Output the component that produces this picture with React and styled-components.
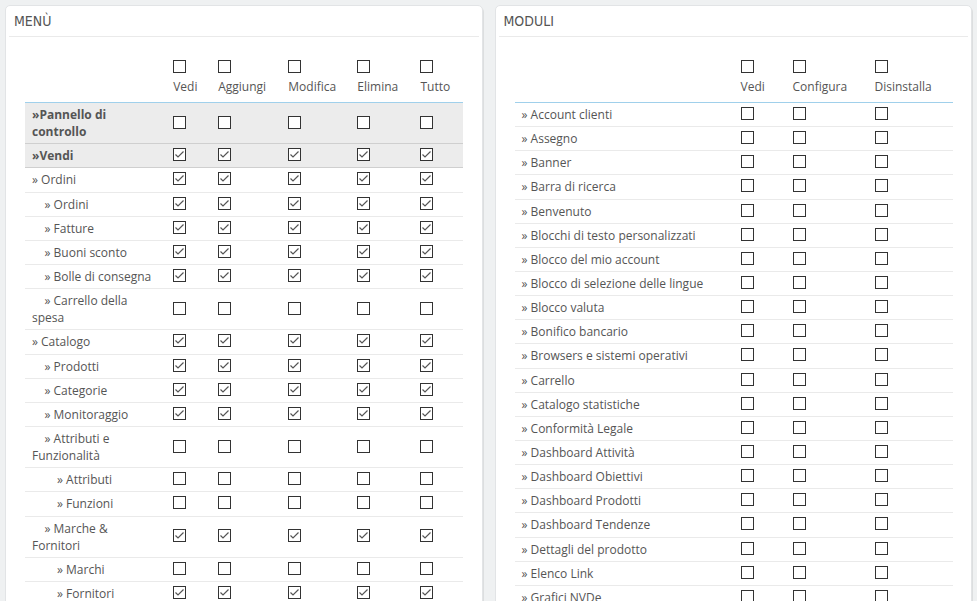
import React from 'react'
import styled, { createGlobalStyle } from 'styled-components'

const GlobalStyle = createGlobalStyle`
  html, body {
    margin: 0;
    padding: 0;
    background: #eff1f2;
    overflow: hidden;
  }
  body {
    font-family: "Open Sans", "Liberation Sans", sans-serif;
    font-size: 12px;
    color: #555;
  }
`;

const menuRows = [
  { label: '»Pannello di controllo', bold: true, checked: false },
  { label: '»Vendi', bold: true, checked: true },
  { label: '» Ordini', level: 1, checked: true },
  { label: '» Ordini', level: 2, checked: true },
  { label: '» Fatture', level: 2, checked: true },
  { label: '» Buoni sconto', level: 2, checked: true },
  { label: '» Bolle di consegna', level: 2, checked: true },
  { label: '» Carrello della spesa', level: 2, checked: false },
  { label: '» Catalogo', level: 1, checked: true },
  { label: '» Prodotti', level: 2, checked: true },
  { label: '» Categorie', level: 2, checked: true },
  { label: '» Monitoraggio', level: 2, checked: true },
  { label: '» Attributi e Funzionalità', level: 2, checked: false },
  { label: '» Attributi', level: 3, checked: false },
  { label: '» Funzioni', level: 3, checked: false },
  { label: '» Marche & Fornitori', level: 2, checked: true },
  { label: '» Marchi', level: 3, checked: false },
  { label: '» Fornitori', level: 3, checked: true },
  { label: '» File', level: 2, checked: true },
  { label: '» Clienti', level: 1, checked: true },
];

const moduleRows = [
  'Account clienti', 'Assegno', 'Banner', 'Barra di ricerca', 'Benvenuto',
  'Blocchi di testo personalizzati', 'Blocco del mio account',
  'Blocco di selezione delle lingue', 'Blocco valuta', 'Bonifico bancario',
  'Browsers e sistemi operativi', 'Carrello', 'Catalogo statistiche',
  'Conformità Legale', 'Dashboard Attività', 'Dashboard Obiettivi',
  'Dashboard Prodotti', 'Dashboard Tendenze', 'Dettagli del prodotto',
  'Elenco Link', 'Grafici NVDe', 'Immagini', 'Newsletter',
];

const menuCols = [
  { label: 'Vedi', width: 45 },
  { label: 'Aggiungi', width: 70 },
  { label: 'Modifica', width: 69 },
  { label: 'Elimina', width: 63 },
  { label: 'Tutto', width: 49 },
];

const moduleCols = [
  { label: 'Vedi', width: 52 },
  { label: 'Configura', width: 82 },
  { label: 'Disinstalla', width: 85 },
];

const Check = ({ checked }) => (
  <Box>
    {checked && (
      <svg width="11" height="11" viewBox="0 0 11 11">
        <polyline points="1.5,5.5 4,8 9.5,2.5" fill="none" stroke="#555" strokeWidth="1.2" />
      </svg>
    )}
  </Box>
);

const PermTable = ({ firstWidth, cols, children }) => (
  <Table>
    <colgroup>
      <col style={{ width: firstWidth }} />
      {cols.map((c, i) => <col key={i} style={{ width: c.width }} />)}
    </colgroup>
    <thead>
      <tr>
        <Th />
        {cols.map((c, i) => (
          <Th key={i}>
            <HeadBox><Check /></HeadBox>
            <span>{c.label}</span>
          </Th>
        ))}
      </tr>
    </thead>
    <tbody>{children}</tbody>
  </Table>
);

const App = () => {
  return (
    <>
      <GlobalStyle />
      <Page>
        <Panel>
          <Heading>Menù</Heading>
          <Body>
            <PermTable firstWidth={141} cols={menuCols}>
              {menuRows.map((r, i) => (
                <Row key={i} $strong={r.bold}>
                  <Label $bold={r.bold} $level={r.level || 1}>{r.label}</Label>
                  {menuCols.map((c, j) => (
                    <Cell key={j}><Check checked={r.checked} /></Cell>
                  ))}
                </Row>
              ))}
            </PermTable>
          </Body>
        </Panel>
        <Panel>
          <Heading>Moduli</Heading>
          <Body>
            <PermTable firstWidth={219} cols={moduleCols}>
              {moduleRows.map((m, i) => (
                <Row key={i}>
                  <Label $level={1}>» {m}</Label>
                  {moduleCols.map((c, j) => (
                    <Cell key={j}><Check /></Cell>
                  ))}
                </Row>
              ))}
            </PermTable>
          </Body>
        </Panel>
      </Page>
    </>
  )
};
export default App;

const Page = styled.div`
  display: flex;
  gap: 12px;
  padding: 5px 5px 0 5px;
  align-items: flex-start;
`;

const Panel = styled.div`
  flex: 1;
  min-width: 0;
  background: #fff;
  border: 1px solid #e2e4e6;
  border-radius: 5px;
  box-shadow: 1px 2px 0 rgba(0, 0, 0, 0.08);
  padding: 0 3px 20px;
  height: 700px;
  box-sizing: border-box;
`;

const Heading = styled.div`
  height: 30px;
  line-height: 31px;
  padding-left: 5px;
  border-bottom: 1px solid #eaeaea;
  font-family: "DejaVu Sans Condensed", "Liberation Sans Narrow", "Roboto", sans-serif;
  font-stretch: condensed;
  font-size: 14px;
  text-transform: uppercase;
  color: #555;
`;

const Body = styled.div`
  padding: 15px 16px 0;
`;

const Table = styled.table`
  width: 100%;
  border-collapse: collapse;
  table-layout: fixed;
`;

const Th = styled.th`
  text-align: left;
  vertical-align: bottom;
  font-weight: normal;
  padding: 10px 7px 7px;
  line-height: 17px;
  border-bottom: 1px solid #a0d0eb;
  white-space: nowrap;
`;

const HeadBox = styled.div`
  height: 13px;
  margin-bottom: 5px;
`;

const Row = styled.tr`
  background: ${p => (p.$strong ? '#ececec' : '#fff')};
  & > td {
    border-bottom: 1px solid ${p => (p.$strong ? '#cfcfcf' : '#eaeaea')};
  }
`;

const Label = styled.td`
  padding: 3px 10px 3px 7px;
  line-height: 17.14px;
  font-weight: ${p => (p.$bold ? 700 : 400)};
  text-indent: ${p => (p.$level - 1) * 12.5}px;
  vertical-align: middle;
`;

const Cell = styled.td`
  padding: 3px 7px;
  line-height: 17.14px;
  vertical-align: middle;
`;

const Box = styled.span`
  display: block;
  width: 11px;
  height: 11px;
  margin-top: -2px;
  border: 1px solid #333;
  background: #fff;
  line-height: 0;
`;
